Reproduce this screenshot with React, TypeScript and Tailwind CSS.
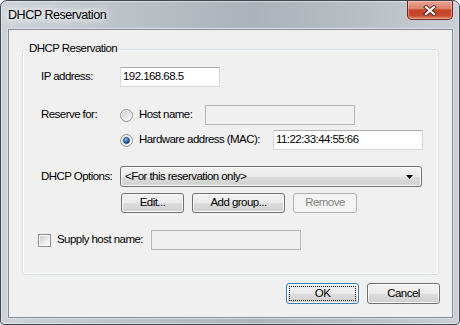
import React from 'react';

const btnFace =
    'bg-[linear-gradient(to_bottom,#f2f2f2_0%,#ebebeb_50%,#dddddd_51%,#cfcfcf_100%)] shadow-[inset_0_0_0_1px_#fcfcfc]';

const Radio = ({ id, checked }: { id: string; checked?: boolean }) => (
    <svg width="13" height="13" viewBox="0 0 13 13" className="shrink-0">
        <defs>
            <linearGradient id={`${id}-ring`} x1="0" y1="0" x2="1" y2="1">
                <stop offset="0" stopColor="#cfcfcf" />
                <stop offset="1" stopColor="#fbfbfb" />
            </linearGradient>
            <radialGradient id={`${id}-dot`} cx="0.4" cy="0.35" r="0.7">
                <stop offset="0" stopColor="#9fd3f7" />
                <stop offset="0.45" stopColor="#2a73b8" />
                <stop offset="1" stopColor="#0e3566" />
            </radialGradient>
        </defs>
        <circle cx="6.5" cy="6.5" r="6" fill="#f6f6f6" stroke="#8f9090" strokeWidth="1" />
        <circle cx="6.5" cy="6.5" r="4.6" fill={`url(#${id}-ring)`} />
        {checked && <circle cx="6.5" cy="6.5" r="3.1" fill={`url(#${id}-dot)`} stroke="#18406f" strokeWidth="0.6" />}
    </svg>
);

const CheckBox = () => (
    <span className="flex h-[13px] w-[13px] shrink-0 items-center justify-center border border-[#8f8f8f] bg-white">
        <span className="h-[9px] w-[9px] bg-[linear-gradient(135deg,#cbcfd5_0%,#eef0f2_70%,#f8f8f8_100%)]" />
    </span>
);

const TextBox = ({ value, disabled, className }: { value?: string; disabled?: boolean; className: string }) => (
    <div
        className={`flex h-[20px] items-center border px-[2px] ${
            disabled
                ? 'border-[#b5b5b5] bg-[#f0f0f0]'
                : 'border-[#d5d9df] border-t-[#abadb3] bg-white'
        } ${className}`}
    >
        {value}
    </div>
);

const Button = ({ label, disabled, className }: { label: string; disabled?: boolean; className: string }) => (
    <div
        className={`flex items-center justify-center rounded-[3px] border ${
            disabled ? 'border-[#adb2b5] bg-[#f4f4f4] text-[#838383]' : `border-[#707070] ${btnFace}`
        } ${className}`}
    >
        {label}
    </div>
);

export default function App() {
    return (
        <div className="h-[325px] w-[460px] bg-white font-['Liberation_Sans',Arial,sans-serif] text-[11.5px] tracking-[-0.55px] text-black">
            <div className="flex h-[325px] w-[460px] flex-col rounded-t-[7px] rounded-b-[4px] border border-[#41464c] bg-[linear-gradient(to_right,#cdd3d8_0%,#b9c0c6_30%,#abb2b9_55%,#b9bfc5_80%,#cad0d5_100%)] shadow-[inset_0_0_0_1px_rgba(255,255,255,0.45)]">
                {/* title bar */}
                <div className="flex h-[28px] items-start justify-between pl-[7px] pr-[6px]">
                    <span className="mt-[7px] text-[12.5px] leading-[15px] tracking-[-0.45px] [text-shadow:0_0_6px_#fff,0_0_10px_#fff,0_0_14px_#fff]">
                        DHCP Reservation
                    </span>
                    <div className="flex h-[19px] w-[46px] items-center justify-center rounded-b-[5px] border border-t-0 border-[#6e2b22] bg-[linear-gradient(to_bottom,#eaa595_0%,#dd816b_42%,#c7442a_50%,#c8462b_78%,#e0805d_100%)] shadow-[inset_0_0_0_1px_rgba(255,220,210,0.45)]">
                        <svg width="14" height="11" viewBox="0 0 14 11">
                            <path d="M3 2 L11 9 M11 2 L3 9" stroke="#5a2a24" strokeWidth="4" strokeLinecap="square" />
                            <path d="M3 2 L11 9 M11 2 L3 9" stroke="#ffffff" strokeWidth="2.2" strokeLinecap="square" />
                        </svg>
                    </div>
                </div>

                {/* client area */}
                <div className="ml-[7px] mr-[6px] mb-[6px] flex h-[289px] flex-col border border-[#858c93] bg-[#f0f0f0] shadow-[0_0_0_1px_#dce0e4]">
                    <div className="relative mx-[13px] mt-[19px] h-[226px] rounded-[3px] border border-[#d5dfe5] pl-[18px] shadow-[inset_0_0_0_1px_#fff]">
                        <span className="absolute left-[5px] top-[-8px] bg-[#f0f0f0] px-[1px] leading-[13px]">
                            DHCP Reservation
                        </span>

                        <div className="mt-[17px] flex h-[20px] items-center">
                            <span className="w-[79px]">IP address:</span>
                            <TextBox className="w-[100px]" value="192.168.68.5" />
                        </div>

                        <div className="mt-[18px] flex">
                            <span className="flex h-[20px] w-[79px] items-center">Reserve for:</span>
                            <div className="flex flex-col gap-[5px]">
                                <div className="flex h-[20px] items-center">
                                    <Radio id="r1" />
                                    <span className="ml-[6px] w-[66px]">Host name:</span>
                                    <TextBox className="w-[150px]" disabled />
                                </div>
                                <div className="flex h-[20px] items-center">
                                    <Radio id="r2" checked />
                                    <span className="ml-[6px] w-[134px]">Hardware address (MAC):</span>
                                    <TextBox className="w-[150px]" value="11:22:33:44:55:66" />
                                </div>
                            </div>
                        </div>

                        <div className="mt-[16px] flex h-[21px] items-center">
                            <span className="w-[79px]">DHCP Options:</span>
                            <div className={`flex h-[21px] w-[302px] items-center justify-between rounded-[3px] border border-[#707070] pl-[4px] pr-[8px] ${btnFace}`}>
                                <span>&lt;For this reservation only&gt;</span>
                                <svg width="7" height="4" viewBox="0 0 7 4">
                                    <path d="M0 0 H7 L3.5 4 Z" fill="#000" />
                                </svg>
                            </div>
                        </div>

                        <div className="ml-[80px] mt-[6px] flex gap-[8px]">
                            <Button label="Edit..." className="h-[20px] w-[63px]" />
                            <Button label="Add group..." className="h-[20px] w-[93px]" />
                            <Button label="Remove" disabled className="h-[20px] w-[64px]" />
                        </div>

                        <div className="-ml-[3px] mt-[17px] flex h-[20px] items-center">
                            <CheckBox />
                            <span className="ml-[6px] w-[94px]">Supply host name:</span>
                            <TextBox className="w-[150px]" disabled />
                        </div>
                    </div>

                    <div className="mt-[8px] flex justify-end gap-[8px] pr-[12px]">
                        <div className={`relative flex h-[21px] w-[73px] items-center justify-center rounded-[3px] border border-[#3c7fb1] ${btnFace}`}>
                            <span className="absolute inset-[2px] border border-dotted border-black" />
                            OK
                        </div>
                        <Button label="Cancel" className="h-[21px] w-[73px]" />
                    </div>
                </div>
            </div>
        </div>
    );
}
